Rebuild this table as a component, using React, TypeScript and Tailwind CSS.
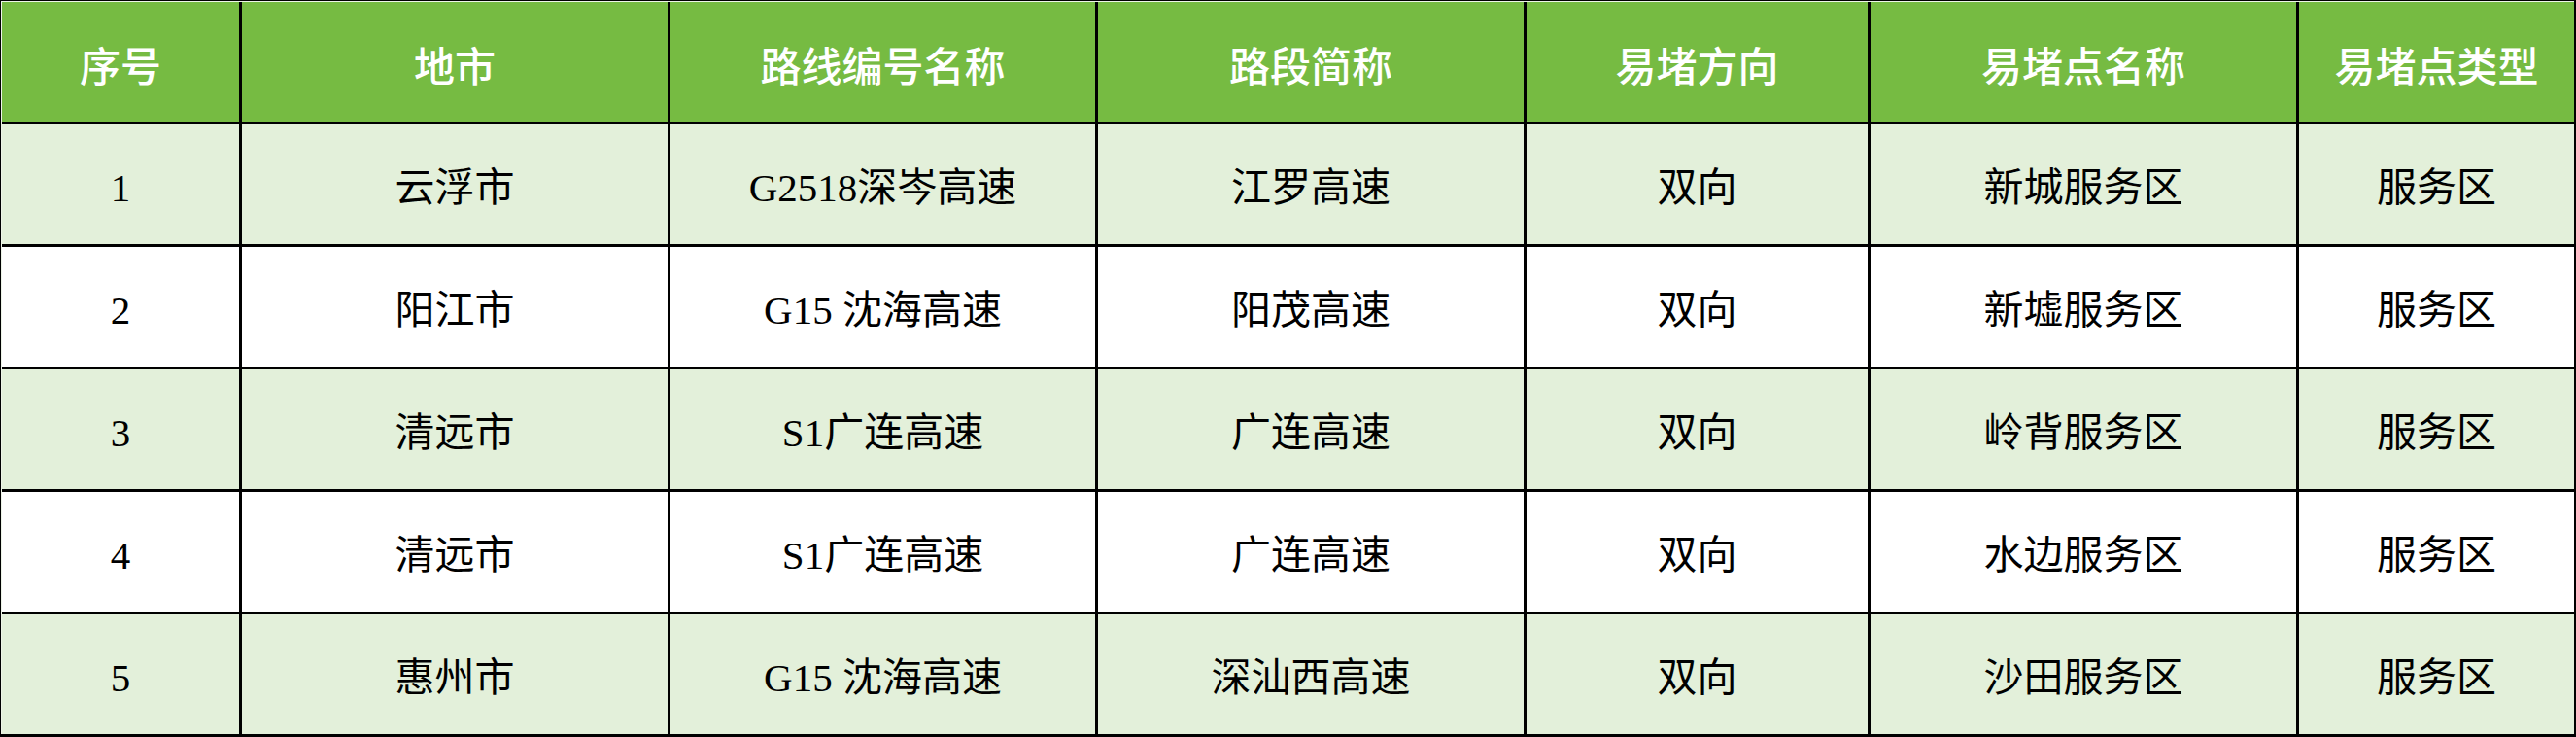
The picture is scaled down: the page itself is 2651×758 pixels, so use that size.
import React from "react";

const headers = ["序号", "地市", "路线编号名称", "路段简称", "易堵方向", "易堵点名称", "易堵点类型"];

const rows: string[][] = [
  ["1", "云浮市", "G2518深岑高速", "江罗高速", "双向", "新城服务区", "服务区"],
  ["2", "阳江市", "G15 沈海高速", "阳茂高速", "双向", "新墟服务区", "服务区"],
  ["3", "清远市", "S1广连高速", "广连高速", "双向", "岭背服务区", "服务区"],
  ["4", "清远市", "S1广连高速", "广连高速", "双向", "水边服务区", "服务区"],
  ["5", "惠州市", "G15 沈海高速", "深汕西高速", "双向", "沙田服务区", "服务区"],
];

export default function App() {
  return (
    <div className="w-[2651px] h-[758px] bg-black pt-[1px] pl-[1px] pr-[2px] pb-[3px]">
      <div className="bg-[#eef5e8] pt-[1px] pl-[1px]">
        <div
          className="grid grid-cols-[244px_438px_437px_438px_351px_438px_283px] grid-rows-[123px_123px_123px_123px_123px_123px] gap-[3px] bg-black leading-none"
          style={{ fontFamily: '"Liberation Serif", "Noto Sans CJK SC", serif' }}
        >
          {headers.map((h) => (
            <div
              key={h}
              className="flex items-center justify-center bg-[#76bb42] pt-[12px] text-[42px] font-medium text-white"
            >
              {h}
            </div>
          ))}
          {rows.map((r, i) =>
            r.map((c, j) => (
              <div
                key={`${i}-${j}`}
                className={`flex items-center justify-center pt-[8px] text-[41px] text-black ${
                  i % 2 === 0 ? "bg-[#e3f0da]" : "bg-white"
                }`}
              >
                {c}
              </div>
            ))
          )}
        </div>
      </div>
    </div>
  );
}
